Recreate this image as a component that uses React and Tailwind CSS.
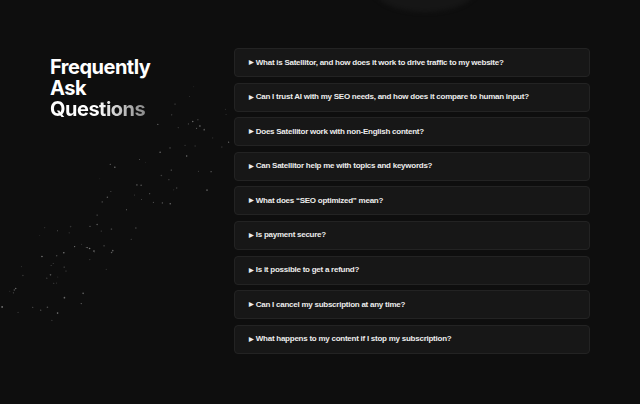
import React from "react";

const questions = [
  "What is Satellitor, and how does it work to drive traffic to my website?",
  "Can I trust AI with my SEO needs, and how does it compare to human input?",
  "Does Satellitor work with non-English content?",
  "Can Satellitor help me with topics and keywords?",
  "What does \u201cSEO optimized\u201d mean?",
  "Is payment secure?",
  "Is it possible to get a refund?",
  "Can I cancel my subscription at any time?",
  "What happens to my content if I stop my subscription?",
];

function rng(seed) {
  let s = seed;
  return () => {
    s = (s * 16807) % 2147483647;
    return (s - 1) / 2147483646;
  };
}

function Stars() {
  const r = rng(7);
  const dots = [];
  for (let i = 0; i < 110; i++) {
    const t = r();
    const cx = 235 - t * 230 + (r() - 0.5) * 90;
    const cy = 100 + t * 210 + (r() - 0.5) * 50;
    const o = 0.12 + r() * 0.35;
    const rad = 0.45 + r() * 0.4;
    dots.push(<circle key={i} cx={cx} cy={cy} r={rad} fill="#ffffff" opacity={o} />);
  }
  return (
    <svg className="absolute left-0 top-0 pointer-events-none" width="640" height="404">
      {dots}
    </svg>
  );
}

export default function App() {
  return (
    <div className="relative w-[640px] h-[404px] overflow-hidden bg-[#0e0e0e]" style={{ fontFamily: "Inter, 'Liberation Sans', sans-serif" }}>
      <div className="absolute left-[372px] top-[-40px] w-[106px] h-[52px] rounded-[50%] bg-[#161616] blur-[2px]" />
      <Stars />
      <div className="relative flex pt-[48px]">
        <div className="w-[234px] pl-[50px] pt-[9px]">
          <h2 className="text-[20px] leading-[21px] font-bold tracking-[-0.5px] text-white">
            Frequently<br />Ask<br />
            <span className="bg-gradient-to-r from-white from-50% to-[#8a8a8a] bg-clip-text text-transparent">Questions</span>
          </h2>
        </div>
        <div className="flex flex-col gap-[5.6px] w-[356px]">
          {questions.map((q) => (
            <div key={q} className="h-[29px] rounded-[4px] border border-[#232323] bg-[#171717] flex items-center pl-[14px]">
              <span className="text-[8px] font-bold tracking-[-0.25px] text-[#ececec] flex items-center gap-[2px]" style={{ fontFamily: "'Liberation Sans', Arial, sans-serif" }}>
                <span className="text-[6px]">▶</span>
                {q}
              </span>
            </div>
          ))}
        </div>
      </div>
    </div>
  );
}
